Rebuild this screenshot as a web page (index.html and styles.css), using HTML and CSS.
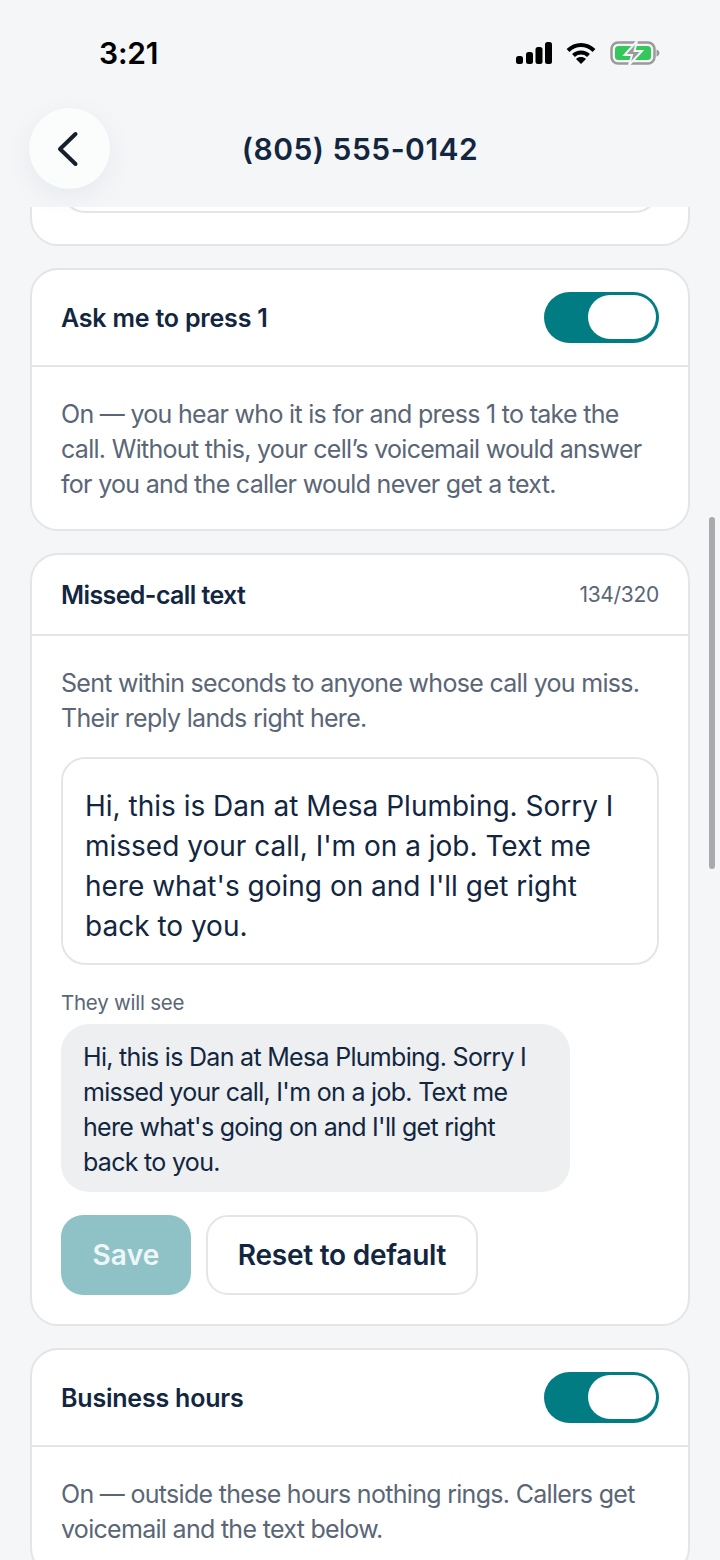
FILE: index.html
```html
<!DOCTYPE html>
<html lang="en">
<head>
    <meta charset="UTF-8">
    <title>(805) 555-0142</title>
    <link rel="stylesheet" href="styles.css">
</head>
<body>
<div class="screen">
    <div class="scroll">
        <section class="card card-cut">
            <div class="cut-field"></div>
        </section>

        <section class="card">
            <div class="card-head head-tall">
                <h2>Ask me to press 1</h2>
                <span class="toggle"><span class="knob"></span></span>
            </div>
            <div class="card-body">
                <p class="note">On — you hear who it is for and press 1 to take the call. Without this, your cell’s voicemail would answer for you and the caller would never get a text.</p>
            </div>
        </section>

        <section class="card">
            <div class="card-head head-mid">
                <h2 class="title-tight">Missed-call text</h2>
                <span class="count">134/320</span>
            </div>
            <div class="card-body">
                <p class="note">Sent within seconds to anyone whose call you miss. Their reply lands right here.</p>
                <div class="field">Hi, this is Dan at Mesa Plumbing. Sorry I missed your call, I'm on a job. Text me here what's going on and I'll get right back to you.</div>
                <div class="see-label">They will see</div>
                <div class="bubble">Hi, this is Dan at Mesa Plumbing. Sorry I missed your call, I'm on a job. Text me here what's going on and I'll get right back to you.</div>
                <div class="actions">
                    <button class="btn btn-save">Save</button>
                    <button class="btn btn-reset">Reset to default</button>
                </div>
            </div>
        </section>

        <section class="card">
            <div class="card-head head-tall">
                <h2>Business hours</h2>
                <span class="toggle"><span class="knob"></span></span>
            </div>
            <div class="card-body">
                <p class="note">On — outside these hours nothing rings. Callers get voicemail and the text below.</p>
            </div>
        </section>
    </div>

    <header class="top">
        <div class="status">
            <span class="time">3:21</span>
            <span class="status-icons">
                <svg width="36" height="22" viewBox="0 0 36 22"><rect x="0" y="14" width="7" height="8" rx="2.5"/><rect x="10" y="10" width="7" height="12" rx="2.5"/><rect x="19.5" y="5" width="7" height="17" rx="2.5"/><rect x="29" y="0" width="7" height="22" rx="2.5"/></svg>
                <svg width="30" height="22" viewBox="0 0 30 22" fill="none" stroke="#000" stroke-width="4"><path d="M2 8.5C9.5 1 20.5 1 28 8.5"/><path d="M7.5 13.5C11.5 9.5 18.5 9.5 22.5 13.5"/><path d="M15 22l-5-5c3-2.6 7-2.6 10 0z" fill="#000" stroke="none"/></svg>
                <svg width="50" height="24" viewBox="0 0 50 24"><rect x="1.5" y="1.5" width="43" height="21" rx="6.5" fill="none" stroke="#9a9a9a" stroke-width="2.5"/><rect x="5" y="5" width="36" height="14" rx="3.5" fill="#34c759"/><path d="M46.5 8.5c2 .6 3 2 3 3.5s-1 2.9-3 3.5z" fill="#9a9a9a"/><path d="M27 0L14.5 14H22L19 24 32 10h-7.5z" fill="#9a9a9a" stroke="#f4f6f8" stroke-width="2"/></svg>
            </span>
        </div>
        <div class="nav">
            <button class="back">
                <svg width="26" height="36" viewBox="0 0 26 36" fill="none" stroke="#16202c" stroke-width="4" stroke-linecap="round" stroke-linejoin="round"><path d="M18.5 3L3 18l15.5 15"/></svg>
            </button>
            <h1>(805) 555-0142</h1>
        </div>
    </header>

    <div class="scrollbar"></div>
</div>
</body>
</html>
```

FILE: styles.css
```css
* { box-sizing: border-box; }
html, body { margin: 0; padding: 0; }
body { background: #f4f6f8; font-family: Inter, "Liberation Sans", sans-serif; color: #12263f; }
h1, h2, p { margin: 0; }

.screen { width: 720px; height: 1560px; position: relative; overflow: hidden; }

/* top bar sits over the scrolled list */
.top { position: absolute; left: 0; top: 0; width: 720px; height: 207px; background: #f4f6f8; }
.status { display: flex; justify-content: space-between; align-items: center; height: 24px; margin-top: 41px; padding: 0 60px 0 99px; }
.time { font-size: 30px; font-weight: 600; color: #000; letter-spacing: -0.2px; }
.status-icons { display: flex; align-items: center; gap: 14px; }

.nav { position: relative; display: flex; justify-content: center; align-items: center; margin-top: 43px; height: 81px; }
.nav h1 { font-size: 30px; font-weight: 600; letter-spacing: 0.5px; }
.back { position: absolute; left: 29px; top: 0; width: 81px; height: 81px; border: 0; border-radius: 50%; background: #fbfcfc; box-shadow: 0 8px 30px rgba(20, 38, 61, 0.06); display: flex; align-items: center; justify-content: center; padding: 0; }

.scroll { display: flex; flex-direction: column; gap: 22px; padding: 0 30px; margin-top: 170px; }
.card { background: #fff; border: 2px solid #e3e5e8; border-radius: 28px; overflow: hidden; }
.card-cut { height: 76px; padding: 0 29px; }
.cut-field { height: 41px; border: 2px solid #e3e5e8; border-top: 0; border-radius: 0 0 24px 24px; }

.card-head { display: flex; justify-content: space-between; align-items: center; height: 80px; padding: 0 29px; border-bottom: 2px solid #e3e5e8; }
.head-tall { height: 97px; }
.head-mid { height: 81px; }
.card-head h2 { font-size: 25px; font-weight: 600; letter-spacing: -0.2px; }
.card-head .title-tight { letter-spacing: -0.6px; }
.count { font-size: 21px; color: #5a6676; letter-spacing: -0.3px; }

.card-body { padding: 30px 29px 27px; }
.note { font-size: 25px; line-height: 35px; color: #5a6676; letter-spacing: -0.7px; }

.field { margin-top: 21px; padding: 27px 22px; height: 208px; border: 2px solid #e3e5e8; border-radius: 24px; font-size: 28px; line-height: 40px; color: #12263f; }
.see-label { margin-top: 25px; font-size: 20.5px; color: #5a6676; letter-spacing: -0.25px; }
.bubble { margin-top: 9px; width: 509px; padding: 16px 22px 12px; background: #edeff1; border-radius: 28px; font-size: 25px; line-height: 35px; color: #12263f; letter-spacing: -0.7px; }

.actions { display: flex; gap: 15px; margin-top: 23px; margin-bottom: 2px; }
.btn { height: 80px; border-radius: 22px; font-family: inherit; font-size: 28px; font-weight: 600; }
.btn-save { width: 130px; border: 0; background: #8fc2c6; color: #eef7f7; letter-spacing: 0.2px; }
.btn-reset { width: 272px; border: 2px solid #e3e5e8; background: #fff; color: #12263f; letter-spacing: -0.25px; }

.toggle { width: 115px; height: 51px; padding: 3px 3px 4px; border-radius: 26px; background: #007c82; display: flex; justify-content: flex-end; }
.knob { display: block; width: 68px; height: 44px; border-radius: 22px; background: #fff; }

.scrollbar { position: absolute; left: 709px; top: 517px; width: 6px; height: 352px; border-radius: 3px; background: #a8aaad; }
```
